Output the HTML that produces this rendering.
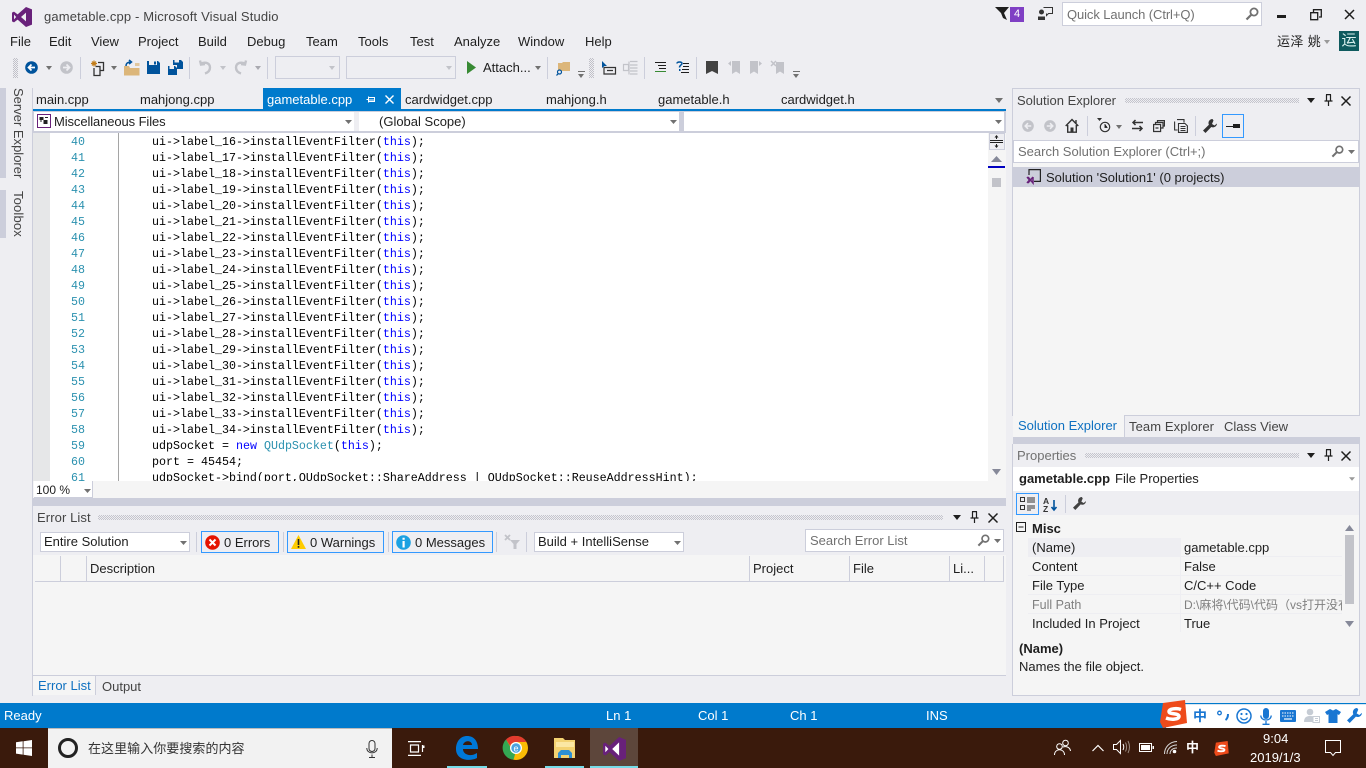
<!DOCTYPE html>
<html lang="en"><head><meta charset="utf-8"><title>gametable.cpp - Microsoft Visual Studio</title>
<style>
*{box-sizing:border-box}
html,body{margin:0;padding:0;width:1366px;height:768px;overflow:hidden;background:#eeeef2;font-family:"Liberation Sans","Noto Sans CJK SC",sans-serif;font-size:13px;color:#1e1e1e}
.t{position:absolute;white-space:nowrap;line-height:16px}
.b{position:absolute}
svg{position:absolute;overflow:visible}
.dd{position:absolute;width:0;height:0;border-left:3.5px solid transparent;border-right:3.5px solid transparent;border-top:4px solid #717171}
.sep{position:absolute;width:1px;height:22px;background:#ccceDB}
.grip{position:absolute;height:5px;background:conic-gradient(#c4c4cc 25%,transparent 0 50%,#c4c4cc 0 75%,transparent 0) 0 0/2px 2px}
.tgrip{position:absolute;width:5px;height:20px;background:conic-gradient(#c0c0c8 25%,transparent 0 50%,#c0c0c8 0 75%,transparent 0) 0 0/2px 2px}
pre{position:absolute;margin:0;font-family:"Liberation Mono",monospace;font-size:11.67px;line-height:16px;color:#000}
i{font-style:normal}
.k{color:#00f}.c{color:#2b91af}
.row{position:absolute;left:1028px;width:314px;height:18px;background:#f5f5f5}
.ebtn{position:absolute;height:22px;top:531px;border:1px solid #3399ff;background:#eeeef2}
</style></head><body>

<!-- title bar -->
<svg style="left:12px;top:7px" width="20" height="20" viewBox="0 0 20 20"><path fill="#68217a" d="M14 0l6 2.400v15.200L14 20 5.600 12.600 2 15.400 0 14.400V5.600l2-1 3.600 2.800zM14 5.600L9 10l5 4.400zM2 7.600v4.800L4.200 10z"/></svg>
<div class="t" style="left:44px;top:9px;color:#444;letter-spacing:.15px">gametable.cpp - Microsoft Visual Studio</div>

<!-- notifications -->
<svg style="left:995px;top:6px" width="15" height="15" viewBox="0 0 15 15"><path fill="#1e1e1e" d="M0 1h14L9 7l3 7-4-2-2-5z"/></svg>
<div class="b" style="left:1010px;top:7px;width:14px;height:15px;background:#7f3fc4;color:#fff;font-size:11px;line-height:15px;text-align:center">4</div>
<svg style="left:1038px;top:6px" width="15" height="15" viewBox="0 0 15 15"><circle cx="3.500" cy="6" r="2.500" fill="#333"/><path fill="#333" d="M0 14v-3.500h7V14z"/><path fill="none" stroke="#333" d="M5.500 1.500h9v6h-4l-2 2v-2"/></svg>
<div class="b" style="left:1062px;top:2px;width:200px;height:24px;background:#fff;border:1px solid #ccceDB"></div>
<div class="t" style="left:1067px;top:7px;color:#717171;letter-spacing:-.1px">Quick Launch (Ctrl+Q)</div>
<svg style="left:1245px;top:7px" width="14" height="14" viewBox="0 0 14 14"><circle cx="9" cy="5" r="3.600" fill="none" stroke="#717171" stroke-width="1.800"/><path stroke="#717171" stroke-width="2.200" d="M6.500 7.500L1.500 12.500"/></svg>
<div class="b" style="left:1277px;top:15px;width:9px;height:3px;background:#1e1e1e"></div>
<svg style="left:1310px;top:9px" width="12" height="12" viewBox="0 0 12 12"><path fill="none" stroke="#1e1e1e" stroke-width="1.300" d="M.7 3.700h7v7h-7zM3.500 3V.7h7.800v7.300H9"/></svg>
<svg style="left:1344px;top:9px" width="12" height="12" viewBox="0 0 12 12"><path stroke="#1e1e1e" stroke-width="1.500" d="M1 1l9 9M10 1l-9 9"/></svg>

<div class="t" style="left:1277px;top:34px;letter-spacing:.4px">运泽 姚</div>
<div class="dd" style="left:1324px;top:40px;border-top-color:#999"></div>
<div class="b" style="left:1339px;top:31px;width:20px;height:20px;background:#0e5a5e;color:#d8f0ee;font-size:15px;line-height:20px;text-align:center">运</div>

<!-- menu -->
<div class="t" style="left:10px;top:34px">File</div>
<div class="t" style="left:49px;top:34px">Edit</div>
<div class="t" style="left:91px;top:34px">View</div>
<div class="t" style="left:138px;top:34px">Project</div>
<div class="t" style="left:198px;top:34px">Build</div>
<div class="t" style="left:247px;top:34px">Debug</div>
<div class="t" style="left:306px;top:34px">Team</div>
<div class="t" style="left:358px;top:34px">Tools</div>
<div class="t" style="left:410px;top:34px">Test</div>
<div class="t" style="left:454px;top:34px">Analyze</div>
<div class="t" style="left:518px;top:34px">Window</div>
<div class="t" style="left:585px;top:34px">Help</div>

<!-- toolbar -->
<div class="tgrip" style="left:13px;top:58px"></div>
<svg style="left:25px;top:61px" width="13" height="13" viewBox="0 0 13 13"><circle cx="6.500" cy="6.500" r="6.300" fill="#00539c"/><path stroke="#fff" stroke-width="1.700" fill="none" d="M10 6.500H4M6.500 3.500l-3 3 3 3"/></svg>
<div class="dd" style="left:46px;top:66px"></div>
<svg style="left:60px;top:61px" width="13" height="13" viewBox="0 0 13 13"><circle cx="6.500" cy="6.500" r="6.300" fill="#c2c3c9"/><path stroke="#eeeef2" stroke-width="1.700" fill="none" d="M3 6.500h6M6.500 3.500l3 3-3 3"/></svg>
<div class="sep" style="left:80px;top:57px"></div>
<svg style="left:90px;top:60px" width="15" height="16" viewBox="0 0 15 16"><path fill="none" stroke="#c27d1a" stroke-width="1.200" d="M1 3.500h6M4 .5v6M2 1.500l4 4M6 1.500l-4 4"/><path fill="none" stroke="#333" stroke-width="1.300" d="M8 2.500h5.500v8H10M4 8v7.500h6V6.500H5.500"/></svg>
<div class="dd" style="left:111px;top:66px"></div>
<svg style="left:124px;top:60px" width="16" height="16" viewBox="0 0 16 16"><path fill="#dcb67a" d="M0 6h5l1 2h9.500v7.500H0z"/><path fill="#dcb67a" d="M11 3h4.500v3H11z" opacity=".7"/><path fill="none" stroke="#00539c" stroke-width="1.500" d="M2 6c0-3 2-4 5-4M5 0l2.500 2L5 4"/></svg>
<svg style="left:147px;top:61px" width="13" height="13" viewBox="0 0 13 13"><path fill="#00539c" d="M0 0h2v4h8V0h1l2 2v11H0zM7 .5h2v3H7z"/></svg>
<svg style="left:168px;top:60px" width="15" height="15" viewBox="0 0 15 15"><path fill="#00539c" d="M5 0h1.500v2.500H11V0H13l2 2v7H9V5H5zM0 6h1.500v3H6V6h1l2 2v7H0z"/></svg>
<div class="sep" style="left:189px;top:57px"></div>
<svg style="left:198px;top:60px" width="15" height="15" viewBox="0 0 15 15"><path fill="none" stroke="#c2c3c9" stroke-width="2.400" d="M3 3.500c5-2 9 0 9 4 0 3-2 5-5 6M2 .5l1 4 4-.5"/></svg>
<div class="dd" style="left:220px;top:66px;border-top-color:#c2c3c9"></div>
<svg style="left:233px;top:60px" width="15" height="15" viewBox="0 0 15 15"><path fill="none" stroke="#c2c3c9" stroke-width="2.400" d="M12 3.500c-5-2-9 0-9 4 0 3 2 5 5 6M13 .5l-1 4-4-.5"/></svg>
<div class="dd" style="left:255px;top:66px;border-top-color:#a9a9b0"></div>
<div class="sep" style="left:267px;top:57px"></div>
<div class="b" style="left:275px;top:56px;width:65px;height:23px;border:1px solid #ccceDB"></div>
<div class="dd" style="left:329px;top:66px;border-top-color:#c2c3c9"></div>
<div class="b" style="left:346px;top:56px;width:110px;height:23px;border:1px solid #ccceDB"></div>
<div class="dd" style="left:446px;top:66px;border-top-color:#c2c3c9"></div>
<svg style="left:466px;top:61px" width="11" height="13" viewBox="0 0 11 13"><path fill="#388a34" d="M1 0l9 6.500L1 13z"/></svg>
<div class="t" style="left:483px;top:60px">Attach...</div>
<div class="dd" style="left:535px;top:66px"></div>
<div class="sep" style="left:547px;top:57px"></div>
<svg style="left:556px;top:61px" width="15" height="15" viewBox="0 0 15 15"><path fill="#dcb67a" d="M2 2h4l1-1h7v9H2z"/><circle cx="3.500" cy="11" r="2" fill="#eeeef2" stroke="#00539c" stroke-width="1.200"/><path stroke="#00539c" stroke-width="1.300" d="M2.300 12.500L.5 14.500"/></svg>
<div class="b" style="left:578px;top:71px;width:7px;height:1px;background:#717171"></div>
<div class="dd" style="left:578px;top:74px"></div>
<div class="tgrip" style="left:589px;top:58px"></div>
<svg style="left:601px;top:61px" width="15" height="14" viewBox="0 0 15 14"><path fill="#00539c" d="M1 0l5 5H3.500L1 7z"/><path fill="none" stroke="#333" stroke-width="1.200" d="M3 6.500h11.500v6.500H3zM6 9.500h6"/></svg>
<svg style="left:623px;top:61px" width="15" height="14" viewBox="0 0 15 14"><path fill="none" stroke="#c2c3c9" stroke-width="1.200" d="M.5 3.500h5v6h-5zM7 .5h7.500M7 4h7.500M7 7h7.500M7 10h7.500M7 13h7.500M6 .5v13"/></svg>
<div class="sep" style="left:644px;top:57px"></div>
<svg style="left:655px;top:62px" width="11" height="11" viewBox="0 0 11 11"><path stroke="#1e1e1e" d="M0 .5h11M3 3.500h8M4 6.500h7"/><path stroke="#388a34" d="M0 9.500h11"/></svg>
<svg style="left:676px;top:61px" width="13" height="13" viewBox="0 0 13 13"><path fill="none" stroke="#00539c" stroke-width="1.500" d="M1 2.500c0-2 5-2 5 0 0 1.500-2.500 1.500-2.500 4"/><path fill="#00539c" d="M3 8h1.500v2H3z"/><path stroke="#1e1e1e" d="M7 2.500h6M7 5.500h6M6 8.500h7M5 11.500h8"/></svg>
<div class="sep" style="left:696px;top:57px"></div>
<svg style="left:706px;top:61px" width="12" height="13" viewBox="0 0 12 13"><path fill="#424242" d="M0 0h12v13l-6-3-6 3z"/></svg>
<svg style="left:728px;top:60px" width="13" height="14" viewBox="0 0 13 14"><path fill="#c2c3c9" d="M4 1h8v13l-4-2.500-4 2.500zM0 3.500l3-2.500v5z"/></svg>
<svg style="left:749px;top:60px" width="13" height="14" viewBox="0 0 13 14"><path fill="#c2c3c9" d="M1 1h8v13l-4-2.500-4 2.500zM13 3.500l-3-2.500v5z"/></svg>
<svg style="left:771px;top:60px" width="14" height="14" viewBox="0 0 14 14"><path fill="#c2c3c9" d="M5 2h8v12l-4-2.500-4 2.500z"/><path stroke="#c2c3c9" stroke-width="1.500" d="M0 1l5 5M5 1L0 6"/></svg>
<div class="b" style="left:793px;top:71px;width:7px;height:1px;background:#717171"></div>
<div class="dd" style="left:793px;top:74px"></div>

<!-- left dock strip -->
<div class="b" style="left:0;top:88px;width:6px;height:90px;background:#ccceDB"></div>
<div class="b" style="left:0;top:190px;width:6px;height:48px;background:#ccceDB"></div>
<div class="t" style="left:10px;top:88px;transform-origin:0 0;transform:translateX(16px) rotate(90deg);color:#444">Server Explorer</div>
<div class="t" style="left:10px;top:191px;transform-origin:0 0;transform:translateX(16px) rotate(90deg);color:#444;letter-spacing:.15px">Toolbox</div>
<div class="b" style="left:32px;top:88px;width:1px;height:608px;background:#ccceDB"></div>

<!-- tabs -->
<div class="t" style="left:36px;top:92px">main.cpp</div>
<div class="t" style="left:140px;top:92px">mahjong.cpp</div>
<div class="b" style="left:263px;top:88px;width:138px;height:21px;background:#007acc"></div>
<div class="t" style="left:267px;top:92px;color:#fff">gametable.cpp</div>
<svg style="left:366px;top:95px" width="9" height="9" viewBox="0 0 9 9"><path fill="none" stroke="#fff" d="M.5 4.500h2M2.500 1.500v6M2.500 2.500h6v4h-6M2.500 5h6"/></svg>
<svg style="left:385px;top:95px" width="9" height="9" viewBox="0 0 9 9"><path stroke="#fff" stroke-width="1.400" d="M.5.500l8 8M8.500.5l-8 8"/></svg>
<div class="t" style="left:405px;top:92px">cardwidget.cpp</div>
<div class="t" style="left:546px;top:92px">mahjong.h</div>
<div class="t" style="left:658px;top:92px">gametable.h</div>
<div class="t" style="left:781px;top:92px">cardwidget.h</div>
<svg style="left:995px;top:98px" width="8" height="5" viewBox="0 0 8 5"><path fill="#717171" d="M0 0h8L4 5z"/></svg>
<div class="b" style="left:33px;top:108.500px;width:973px;height:2.500px;background:#007acc"></div>

<!-- nav bar -->
<div class="b" style="left:33px;top:111px;width:973px;height:22px;background:#ccceDB"></div>
<div class="b" style="left:34px;top:112px;width:645px;height:19px;background:#fff"></div>
<div class="b" style="left:679px;top:112px;width:5px;height:19px;background:#ccceDB"></div>
<div class="b" style="left:684px;top:112px;width:320px;height:19px;background:#fff"></div>
<div class="b" style="left:354px;top:112px;width:5px;height:19px;background:#eeeef2"></div>
<svg style="left:37px;top:114px" width="14" height="14" viewBox="0 0 14 14"><rect x=".5" y=".5" width="13" height="13" fill="#fff" stroke="#68217a"/><path fill="#222" d="M2.500 3h4v3h-4zM6.500 6h4v4h-4z"/><path stroke="#222" d="M4 6v2M8 3.500h3"/></svg>
<div class="t" style="left:54px;top:114px;letter-spacing:-.1px">Miscellaneous Files</div>
<svg style="left:345px;top:120px" width="7" height="4" viewBox="0 0 7 4"><path fill="#717171" d="M0 0h7L3.500 4z"/></svg>
<div class="t" style="left:379px;top:114px">(Global Scope)</div>
<svg style="left:670px;top:120px" width="7" height="4" viewBox="0 0 7 4"><path fill="#717171" d="M0 0h7L3.500 4z"/></svg>
<svg style="left:995px;top:120px" width="7" height="4" viewBox="0 0 7 4"><path fill="#717171" d="M0 0h7L3.500 4z"/></svg>

<!-- editor -->
<div class="b" style="left:33px;top:133px;width:973px;height:348px;background:#fff;overflow:hidden">
<div class="b" style="left:0;top:0;width:17px;height:348px;background:#e6e7e8"></div>
<div class="b" style="left:85px;top:0;width:1px;height:348px;background:#a5a5a5"></div>
<pre class="c" style="left:38px;top:1px;width:15px;color:#2b91af">40
41
42
43
44
45
46
47
48
49
50
51
52
53
54
55
56
57
58
59
60
61</pre>
<pre style="left:119px;top:1px">ui-&gt;label_16-&gt;installEventFilter(<i class="k">this</i>);
ui-&gt;label_17-&gt;installEventFilter(<i class="k">this</i>);
ui-&gt;label_18-&gt;installEventFilter(<i class="k">this</i>);
ui-&gt;label_19-&gt;installEventFilter(<i class="k">this</i>);
ui-&gt;label_20-&gt;installEventFilter(<i class="k">this</i>);
ui-&gt;label_21-&gt;installEventFilter(<i class="k">this</i>);
ui-&gt;label_22-&gt;installEventFilter(<i class="k">this</i>);
ui-&gt;label_23-&gt;installEventFilter(<i class="k">this</i>);
ui-&gt;label_24-&gt;installEventFilter(<i class="k">this</i>);
ui-&gt;label_25-&gt;installEventFilter(<i class="k">this</i>);
ui-&gt;label_26-&gt;installEventFilter(<i class="k">this</i>);
ui-&gt;label_27-&gt;installEventFilter(<i class="k">this</i>);
ui-&gt;label_28-&gt;installEventFilter(<i class="k">this</i>);
ui-&gt;label_29-&gt;installEventFilter(<i class="k">this</i>);
ui-&gt;label_30-&gt;installEventFilter(<i class="k">this</i>);
ui-&gt;label_31-&gt;installEventFilter(<i class="k">this</i>);
ui-&gt;label_32-&gt;installEventFilter(<i class="k">this</i>);
ui-&gt;label_33-&gt;installEventFilter(<i class="k">this</i>);
ui-&gt;label_34-&gt;installEventFilter(<i class="k">this</i>);
udpSocket = <i class="k">new</i> <i class="c">QUdpSocket</i>(<i class="k">this</i>);
port = 45454;
udpSocket-&gt;bind(port,QUdpSocket::ShareAddress | QUdpSocket::ReuseAddressHint);</pre>
</div>
<!-- editor scrollbar -->
<div class="b" style="left:988px;top:133px;width:18px;height:348px;background:#f5f5f5"></div>
<div class="b" style="left:989px;top:133px;width:16px;height:17px;background:#eeeef2;border:1px solid #ccceDB"></div>
<svg style="left:990px;top:135px" width="13" height="13" viewBox="0 0 13 13"><path stroke="#222" d="M0 5.500h13M0 7.500h13M6.500 1v3M6.500 9v3"/><path fill="#222" d="M4.500 2.500l2-2.500 2 2.500zM4.500 10.500l2 2.500 2-2.500z"/></svg>
<svg style="left:991px;top:156px" width="11" height="6" viewBox="0 0 11 6"><path fill="#868999" d="M0 6l5.500-6L11 6z"/></svg>
<div class="b" style="left:988px;top:166px;width:17px;height:1.500px;background:#0000c0"></div>
<div class="b" style="left:992px;top:178px;width:9px;height:9px;background:#c2c3c9"></div>
<svg style="left:992px;top:469px" width="9" height="6" viewBox="0 0 9 6"><path fill="#868999" d="M0 0l4.500 6L9 0z"/></svg>

<!-- zoom row -->
<div class="b" style="left:33px;top:481px;width:973px;height:17px;background:#f5f5f5"></div>
<div class="b" style="left:34px;top:481px;width:59px;height:17px;background:#fff;border-right:1px solid #ccceDB;border-bottom:1px solid #ccceDB"></div>
<div class="t" style="left:36px;top:482px;font-size:12px">100 %</div>
<svg style="left:84px;top:489px" width="7" height="4" viewBox="0 0 7 4"><path fill="#717171" d="M0 0h7L3.500 4z"/></svg>
<div class="b" style="left:33px;top:498px;width:973px;height:8px;background:#ccceDB"></div>

<!-- error list -->
<div class="b" style="left:33px;top:506px;width:973px;height:49px;background:#eeeef2"></div>
<div class="t" style="left:37px;top:510px;color:#444;letter-spacing:.1px">Error List</div>
<div class="grip" style="left:98px;top:515px;width:845px"></div>
<svg style="left:953px;top:515px" width="8" height="5" viewBox="0 0 8 5"><path fill="#1e1e1e" d="M0 0h8L4 5z"/></svg>
<svg style="left:970px;top:511px" width="9" height="12" viewBox="0 0 9 12"><path fill="none" stroke="#1e1e1e" stroke-width="1.200" d="M2 .6h5M2.500 .6v6M6.500 .6v6M.5 7h8M4.500 7v5"/></svg>
<svg style="left:988px;top:513px" width="10" height="10" viewBox="0 0 10 10"><path stroke="#1e1e1e" stroke-width="1.500" d="M.5.500l9 9M9.500.5l-9 9"/></svg>

<div class="b" style="left:40px;top:532px;width:150px;height:20px;background:#fff;border:1px solid #ccceDB"></div>
<div class="t" style="left:44px;top:534px">Entire Solution</div>
<svg style="left:180px;top:541px" width="7" height="4" viewBox="0 0 7 4"><path fill="#717171" d="M0 0h7L3.500 4z"/></svg>
<div class="sep" style="left:196px;top:532px;height:20px"></div>
<div class="ebtn" style="left:201px;width:78px"></div>
<svg style="left:205px;top:535px" width="15" height="15" viewBox="0 0 15 15"><circle cx="7.500" cy="7.500" r="7.300" fill="#e51400"/><path stroke="#fff" stroke-width="2" d="M4.500 4.500l6 6M10.500 4.500l-6 6"/></svg>
<div class="t" style="left:224px;top:535px">0 Errors</div>
<div class="sep" style="left:283px;top:532px;height:20px"></div>
<div class="ebtn" style="left:287px;width:97px"></div>
<svg style="left:291px;top:535px" width="15" height="14" viewBox="0 0 15 14"><path fill="#fc0" d="M7.500 0L15 14H0z"/><path fill="#222" d="M6.700 4h1.600v6H6.700zM6.700 11h1.600v1.800H6.700z"/></svg>
<div class="t" style="left:310px;top:535px">0 Warnings</div>
<div class="sep" style="left:388px;top:532px;height:20px"></div>
<div class="ebtn" style="left:392px;width:101px"></div>
<svg style="left:396px;top:535px" width="15" height="15" viewBox="0 0 15 15"><circle cx="7.500" cy="7.500" r="7.300" fill="#1ba1e2"/><path fill="#fff" d="M6.500 6h2.200v6.500H6.500zM6.500 2.700h2.200v2H6.500z"/></svg>
<div class="t" style="left:415px;top:535px">0 Messages</div>
<div class="sep" style="left:496px;top:532px;height:20px"></div>
<svg style="left:505px;top:534px" width="15" height="15" viewBox="0 0 15 15"><path stroke="#c2c3c9" stroke-width="1.800" d="M0 1l5 5M5 1L0 6"/><path fill="#c2c3c9" d="M5 6h10l-3.500 4v5h-3v-5z"/></svg>
<div class="sep" style="left:526px;top:532px;height:20px"></div>
<div class="b" style="left:534px;top:532px;width:150px;height:20px;background:#fff;border:1px solid #ccceDB"></div>
<div class="t" style="left:538px;top:534px">Build + IntelliSense</div>
<svg style="left:674px;top:541px" width="7" height="4" viewBox="0 0 7 4"><path fill="#717171" d="M0 0h7L3.500 4z"/></svg>
<div class="b" style="left:805px;top:529px;width:199px;height:23px;background:#fff;border:1px solid #ccceDB"></div>
<div class="t" style="left:810px;top:533px;color:#717171">Search Error List</div>
<svg style="left:977px;top:534px" width="13" height="13" viewBox="0 0 14 14"><circle cx="9" cy="5" r="3.600" fill="none" stroke="#717171" stroke-width="1.800"/><path stroke="#717171" stroke-width="2.200" d="M6.500 7.500L1.500 12.500"/></svg>
<svg style="left:994px;top:539px" width="7" height="4" viewBox="0 0 7 4"><path fill="#717171" d="M0 0h7L3.500 4z"/></svg>

<div class="b" style="left:33px;top:555px;width:973px;height:120px;background:#f5f5f5"></div>
<div class="b" style="left:35px;top:581px;width:969px;height:1px;background:#ccceDB"></div>
<div class="b" style="left:60px;top:556px;width:1px;height:25px;background:#ccceDB"></div>
<div class="b" style="left:86px;top:556px;width:1px;height:25px;background:#ccceDB"></div>
<div class="b" style="left:749px;top:556px;width:1px;height:25px;background:#ccceDB"></div>
<div class="b" style="left:849px;top:556px;width:1px;height:25px;background:#ccceDB"></div>
<div class="b" style="left:949px;top:556px;width:1px;height:25px;background:#ccceDB"></div>
<div class="b" style="left:984px;top:556px;width:1px;height:25px;background:#ccceDB"></div>
<div class="b" style="left:1003px;top:556px;width:1px;height:25px;background:#ccceDB"></div>
<div class="t" style="left:90px;top:561px">Description</div>
<div class="t" style="left:753px;top:561px">Project</div>
<div class="t" style="left:853px;top:561px">File</div>
<div class="t" style="left:953px;top:561px">Li...</div>
<div class="b" style="left:33px;top:675px;width:973px;height:1px;background:#ccceDB"></div>
<div class="b" style="left:33px;top:676px;width:63px;height:19px;background:#f5f5f5;border-right:1px solid #ccceDB"></div>
<div class="t" style="left:38px;top:678px;color:#0e70c0">Error List</div>
<div class="t" style="left:102px;top:679px;color:#444">Output</div>

<!-- solution explorer -->
<div class="b" style="left:1012px;top:88px;width:348px;height:328px;background:#f5f5f5;border:1px solid #ccceDB"></div>
<div class="b" style="left:1013px;top:89px;width:346px;height:52px;background:#eeeef2"></div>
<div class="t" style="left:1017px;top:93px;color:#444">Solution Explorer</div>
<div class="grip" style="left:1125px;top:98px;width:174px"></div>
<svg style="left:1307px;top:98px" width="8" height="5" viewBox="0 0 8 5"><path fill="#1e1e1e" d="M0 0h8L4 5z"/></svg>
<svg style="left:1324px;top:94px" width="9" height="12" viewBox="0 0 9 12"><path fill="none" stroke="#1e1e1e" stroke-width="1.200" d="M2 .6h5M2.500 .6v6M6.500 .6v6M.5 7h8M4.500 7v5"/></svg>
<svg style="left:1341px;top:96px" width="10" height="10" viewBox="0 0 10 10"><path stroke="#1e1e1e" stroke-width="1.500" d="M.5.500l9 9M9.500.5l-9 9"/></svg>
<svg style="left:1022px;top:120px" width="12" height="12" viewBox="0 0 13 13"><circle cx="6.500" cy="6.500" r="6.300" fill="#c2c3c9"/><path stroke="#eeeef2" stroke-width="1.700" fill="none" d="M10 6.500H4M6.500 3.500l-3 3 3 3"/></svg>
<svg style="left:1044px;top:120px" width="12" height="12" viewBox="0 0 13 13"><circle cx="6.500" cy="6.500" r="6.300" fill="#c2c3c9"/><path stroke="#eeeef2" stroke-width="1.700" fill="none" d="M3 6.500h6M6.500 3.500l3 3-3 3"/></svg>
<svg style="left:1065px;top:118px" width="14" height="15" viewBox="0 0 14 15"><path fill="none" stroke="#333" stroke-width="1.400" d="M.7 8L7 1.500 13.300 8M2.700 7v7.200h8.600V7M11 2v3"/><path fill="#333" d="M5.500 9.500h3V14h-3z"/></svg>
<div class="sep" style="left:1087px;top:116px;height:20px"></div>
<svg style="left:1097px;top:118px" width="14" height="15" viewBox="0 0 14 15"><path fill="#333" d="M0 0h5L2.500 3z"/><circle cx="8" cy="9" r="4.700" fill="none" stroke="#333" stroke-width="1.200"/><path stroke="#333" d="M8 6v3.500h2.500"/></svg>
<div class="dd" style="left:1116px;top:125px"></div>
<svg style="left:1131px;top:119px" width="13" height="13" viewBox="0 0 13 13"><path fill="none" stroke="#333" stroke-width="1.500" d="M12 3.500H2M4.500 1L2 3.500 4.500 6M1 9.500h10M8.500 7l2.500 2.500L8.500 12"/></svg>
<svg style="left:1153px;top:120px" width="12" height="12" viewBox="0 0 12 12"><path fill="none" stroke="#333" stroke-width="1.200" d="M.6 4.500h7v7h-7zM2.500 4V2.500h7.500V8H8M4.500 2V.6H11.400V6H10M2.500 8h3"/></svg>
<svg style="left:1174px;top:119px" width="14" height="14" viewBox="0 0 14 14"><path fill="none" stroke="#333" stroke-width="1.100" d="M3 .6h7v3M.6 2.500v8.500h3M4.500 4.500h6.500l2.400 2.400v6.500H4.500zM6.500 7.500h5M6.500 9.500h5M6.500 11.500h5"/></svg>
<div class="sep" style="left:1195px;top:116px;height:20px"></div>
<svg style="left:1203px;top:119px" width="14" height="14" viewBox="0 0 14 14"><path fill="#333" d="M9.500 0a4 4 0 0 0-3.600 5.800L0 11.500 2.500 14l5.800-6A4 4 0 0 0 14 4.500l-2.500 2L9 5 10.500 1.500z"/></svg>
<div class="b" style="left:1222px;top:114px;width:22px;height:24px;border:1px solid #3399ff"></div>
<div class="b" style="left:1226px;top:126px;width:14px;height:1px;background:#1e1e1e"></div>
<div class="b" style="left:1233px;top:124px;width:7px;height:4px;background:#1e1e1e"></div>
<div class="b" style="left:1013px;top:140px;width:346px;height:23px;background:#fff;border:1px solid #ccceDB"></div>
<div class="t" style="left:1018px;top:144px;color:#717171">Search Solution Explorer (Ctrl+;)</div>
<svg style="left:1331px;top:145px" width="13" height="13" viewBox="0 0 14 14"><circle cx="9" cy="5" r="3.600" fill="none" stroke="#717171" stroke-width="1.800"/><path stroke="#717171" stroke-width="2.200" d="M6.500 7.500L1.500 12.500"/></svg>
<svg style="left:1348px;top:150px" width="7" height="4" viewBox="0 0 7 4"><path fill="#717171" d="M0 0h7L3.500 4z"/></svg>
<div class="b" style="left:1013px;top:167px;width:346px;height:20px;background:#ccceDB"></div>
<svg style="left:1026px;top:169px" width="15" height="15" viewBox="0 0 15 15"><path fill="none" stroke="#222" stroke-width="1.200" d="M3 6V.6h11.400v11.800H8"/><path fill="none" stroke="#68217a" stroke-width="1.500" d="M1 8l2.500 3L1 14M7 8l-5 6M7 8v6L2 8"/></svg>
<div class="t" style="left:1046px;top:170px">Solution 'Solution1' (0 projects)</div>
<div class="b" style="left:1013px;top:415px;width:111px;height:22px;background:#f5f5f5"></div>
<div class="b" style="left:1124px;top:415px;width:1px;height:22px;background:#ccceDB"></div>
<div class="b" style="left:1125px;top:415px;width:235px;height:1px;background:#ccceDB"></div>
<div class="t" style="left:1018px;top:418px;color:#0e70c0">Solution Explorer</div>
<div class="t" style="left:1129px;top:419px;color:#444;letter-spacing:.1px">Team Explorer</div>
<div class="t" style="left:1224px;top:419px;color:#444">Class View</div>
<div class="b" style="left:1013px;top:437px;width:347px;height:7px;background:#ccceDB"></div>

<!-- properties -->
<div class="b" style="left:1012px;top:444px;width:348px;height:252px;background:#f5f5f5;border:1px solid #ccceDB;border-top:0"></div>
<div class="b" style="left:1013px;top:444px;width:346px;height:24px;background:#eeeef2"></div>
<div class="t" style="left:1017px;top:448px;color:#717171">Properties</div>
<div class="grip" style="left:1085px;top:453px;width:214px"></div>
<svg style="left:1307px;top:453px" width="8" height="5" viewBox="0 0 8 5"><path fill="#1e1e1e" d="M0 0h8L4 5z"/></svg>
<svg style="left:1324px;top:449px" width="9" height="12" viewBox="0 0 9 12"><path fill="none" stroke="#1e1e1e" stroke-width="1.200" d="M2 .6h5M2.500 .6v6M6.500 .6v6M.5 7h8M4.500 7v5"/></svg>
<svg style="left:1341px;top:451px" width="10" height="10" viewBox="0 0 10 10"><path stroke="#1e1e1e" stroke-width="1.500" d="M.5.500l9 9M9.500.5l-9 9"/></svg>
<div class="b" style="left:1013px;top:467px;width:346px;height:24px;background:#fff"></div>
<div class="t" style="left:1019px;top:471px;font-weight:bold">gametable.cpp</div>
<div class="t" style="left:1115px;top:471px">File Properties</div>
<svg style="left:1349px;top:477px" width="6" height="4" viewBox="0 0 7 4"><path fill="#999" d="M0 0h7L3.500 4z"/></svg>
<div class="b" style="left:1013px;top:491px;width:346px;height:24px;background:#eeeef2"></div>
<div class="b" style="left:1016px;top:493px;width:23px;height:22px;border:1px solid #3399ff"></div>
<svg style="left:1020px;top:497px" width="15" height="14" viewBox="0 0 15 14"><path fill="none" stroke="#333" d="M.5.500h4v4h-4zM.5 8.500h4v4h-4zM7 1h8M7 3h8M7 5h8M7 9h8M7 11h8M7 13h4"/></svg>
<svg style="left:1043px;top:497px" width="15" height="15" viewBox="0 0 15 15"><text x="0" y="7" font-family="Liberation Sans" font-size="8.500" font-weight="bold" fill="#333">A</text><text x="0" y="15" font-family="Liberation Sans" font-size="8.500" font-weight="bold" fill="#333">Z</text><path stroke="#00539c" stroke-width="1.600" fill="none" d="M11 3v10M8.500 10l2.500 3 2.500-3"/></svg>
<div class="sep" style="left:1065px;top:495px;height:18px"></div>
<svg style="left:1073px;top:497px" width="13" height="13" viewBox="0 0 14 14"><path fill="#424242" d="M9.500 0a4 4 0 0 0-3.600 5.800L0 11.500 2.500 14l5.800-6A4 4 0 0 0 14 4.500l-2.500 2L9 5 10.500 1.500z"/></svg>
<svg style="left:1016px;top:522px" width="11" height="11" viewBox="0 0 11 11"><path fill="none" stroke="#1e1e1e" d="M.5.500h9v9h-9zM2.500 5h5"/></svg>
<div class="t" style="left:1032px;top:521px;font-weight:bold">Misc</div>
<div class="b" style="left:1028px;top:538px;width:314px;height:18px;background:#eeeef2"></div>
<div class="b" style="left:1181px;top:538px;width:161px;height:18px;background:#f5f5f5"></div>
<div class="row" style="top:557px"></div>
<div class="row" style="top:576px"></div>
<div class="row" style="top:595px"></div>
<div class="row" style="top:614px"></div>
<div class="b" style="left:1028px;top:556px;width:314px;height:1px;background:#eeeef2"></div>
<div class="b" style="left:1028px;top:575px;width:314px;height:1px;background:#eeeef2"></div>
<div class="b" style="left:1028px;top:594px;width:314px;height:1px;background:#eeeef2"></div>
<div class="b" style="left:1028px;top:613px;width:314px;height:1px;background:#eeeef2"></div>
<div class="b" style="left:1180px;top:538px;width:1px;height:94px;background:#eeeef2"></div>
<div class="t" style="left:1032px;top:540px">(Name)</div><div class="t" style="left:1184px;top:540px">gametable.cpp</div>
<div class="t" style="left:1032px;top:559px">Content</div><div class="t" style="left:1184px;top:559px">False</div>
<div class="t" style="left:1032px;top:578px">File Type</div><div class="t" style="left:1184px;top:578px">C/C++ Code</div>
<div class="t" style="left:1032px;top:597px;color:#808080;font-size:12.500px">Full Path</div>
<div class="b" style="left:1184px;top:597px;width:158px;height:16px;overflow:hidden"><div class="t" style="left:0;top:0;color:#808080;font-size:12px">D:\麻将\代码\代码（vs打开没有</div></div>
<div class="t" style="left:1032px;top:616px">Included In Project</div><div class="t" style="left:1184px;top:616px">True</div>
<div class="b" style="left:1342px;top:518px;width:15px;height:115px;background:#f5f5f5"></div>
<svg style="left:1345px;top:525px" width="9" height="6" viewBox="0 0 9 6"><path fill="#868999" d="M0 6l4.500-6L9 6z"/></svg>
<div class="b" style="left:1345px;top:535px;width:9px;height:69px;background:#c2c3c9"></div>
<svg style="left:1345px;top:621px" width="9" height="6" viewBox="0 0 9 6"><path fill="#868999" d="M0 0l4.500 6L9 0z"/></svg>
<div class="t" style="left:1019px;top:641px;font-weight:bold">(Name)</div>
<div class="t" style="left:1019px;top:659px">Names the file object.</div>

<!-- status bar -->
<div class="b" style="left:0;top:703px;width:1366px;height:25px;background:#007acc"></div>
<div class="t" style="left:4px;top:708px;color:#fff">Ready</div>
<div class="t" style="left:606px;top:708px;color:#fff">Ln 1</div>
<div class="t" style="left:698px;top:708px;color:#fff">Col 1</div>
<div class="t" style="left:790px;top:708px;color:#fff">Ch 1</div>
<div class="t" style="left:926px;top:708px;color:#fff">INS</div>

<!-- sogou bar -->
<div class="b" style="left:1166px;top:704px;width:200px;height:24px;background:#fff;border-top:1px solid #d9e6f2"></div>
<svg style="left:1160px;top:700px" width="27" height="28" viewBox="0 0 27 28"><path fill="#ee4b1b" d="M3 3L25 0l2 23-24 5-3-6z"/><path fill="none" stroke="#fff" stroke-width="3.500" d="M21 9.500c-4-1.500-12-1-12 2 0 3.500 10 1 10 5 0 3-8 3.500-13 1.500"/></svg>
<div class="t" style="left:1193px;top:708px;color:#1976d2;font-size:14px;font-weight:bold">中</div>
<svg style="left:1217px;top:709px" width="13" height="14" viewBox="0 0 13 14"><circle cx="2.500" cy="4" r="1.800" fill="none" stroke="#1976d2" stroke-width="1.300"/><path fill="none" stroke="#1976d2" stroke-width="2" d="M11 5c0 3-1 5-2.500 6"/></svg>
<svg style="left:1236px;top:708px" width="16" height="16" viewBox="0 0 16 16"><circle cx="8" cy="8" r="7" fill="none" stroke="#1976d2" stroke-width="1.500"/><circle cx="5.500" cy="6" r="1.100" fill="#1976d2"/><circle cx="10.500" cy="6" r="1.100" fill="#1976d2"/><path fill="none" stroke="#1976d2" stroke-width="1.300" d="M4.500 9.500c1.500 3 5.500 3 7 0"/></svg>
<svg style="left:1260px;top:708px" width="12" height="17" viewBox="0 0 12 17"><rect x="3" y="0" width="6" height="11" rx="3" fill="#1976d2"/><path fill="none" stroke="#1976d2" stroke-width="1.300" d="M.8 7.500c0 6 10.400 6 10.400 0M6 13v3M2.500 16.300h7"/></svg>
<svg style="left:1280px;top:710px" width="16" height="12" viewBox="0 0 16 12"><rect width="16" height="12" rx="1" fill="#1976d2"/><path stroke="#fff" stroke-dasharray="1.500 1" d="M2 3h12M2 6h12"/><path stroke="#fff" stroke-width="1.200" d="M4 9h8"/></svg>
<svg style="left:1304px;top:708px" width="16" height="16" viewBox="0 0 16 16"><circle cx="6" cy="4" r="3.300" fill="#c6ccd4"/><path fill="#c6ccd4" d="M0 14c0-5 3-6 6-6s4 1 4 1v5z"/><path fill="#fff" stroke="#c6ccd4" d="M9 8.500h6.500v6H9z"/><path stroke="#c6ccd4" d="M11 10.500h3M11 12.500h3"/></svg>
<svg style="left:1325px;top:709px" width="16" height="14" viewBox="0 0 16 14"><path fill="#1976d2" d="M5 0l3 1.500L11 0l5 3-2 3-1.500-.8V14h-9V5.200L2 6 0 3z"/></svg>
<svg style="left:1347px;top:708px" width="15" height="15" viewBox="0 0 14 14"><path fill="#1976d2" d="M9.500 0a4 4 0 0 0-3.600 5.800L0 11.500 2.500 14l5.800-6A4 4 0 0 0 14 4.500l-2.500 2L9 5 10.500 1.500z"/></svg>

<!-- taskbar -->
<div class="b" style="left:0;top:728px;width:1366px;height:40px;background:#3a1a0c"></div>
<svg style="left:16px;top:740px" width="16" height="16" viewBox="0 0 16 16"><path fill="#fff" d="M0 2.300L6.700 1.300V7.500H0zM7.500 1.200L16 0V7.500H7.500zM0 8.300H6.700V14.600L0 13.600zM7.500 8.300H16V16L7.500 14.800z"/></svg>
<div class="b" style="left:48px;top:728px;width:344px;height:40px;background:#f2f2f2;border-top:1px solid #bbb"></div>
<div class="b" style="left:58px;top:738px;width:20px;height:20px;border-radius:50%;border:3px solid #222"></div>
<div class="t" style="left:88px;top:741px;color:#333;font-size:13px;letter-spacing:.05px">在这里输入你要搜索的内容</div>
<svg style="left:366px;top:740px" width="12" height="18" viewBox="0 0 12 18"><rect x="3" y=".5" width="6" height="11" rx="3" fill="none" stroke="#333"/><path fill="none" stroke="#333" d="M.8 8c0 6.500 10.400 6.500 10.400 0M6 14.500v3M3 17.500h6"/></svg>
<svg style="left:408px;top:741px" width="17" height="15" viewBox="0 0 17 15"><path fill="none" stroke="#fff" stroke-width="1.200" d="M0 .6h13M0 14.400h13M2.500 4h8v7h-8zM14.500 4v7"/><rect x="14" y="4.500" width="2.500" height="2.500" fill="#fff"/></svg>
<svg style="left:456px;top:736px" width="22" height="24" viewBox="0 0 22 24"><path fill="#0078d7" d="M11 0c7 0 11 5 11 13H7c0 6 8 8 14 4v5c-8 4-21 2-21-9C0 5 5 0 11 0zM7 9h9c0-5-8-5-9 0z"/></svg>
<svg style="left:504px;top:736px" width="24" height="24" viewBox="0 0 24 24"><circle cx="12" cy="12" r="12" fill="#fbbc05"/><path fill="#e33b2e" d="M12 0a12 12 0 0 1 10.400 6H12a6 6 0 0 0-5.800 4L2 3.500A12 12 0 0 1 12 0z"/><path fill="#34a853" d="M2 3.500l5 8.500 4 6.500-1.500 5.300A12 12 0 0 1 2 3.500z"/><circle cx="12" cy="12" r="6" fill="#fff"/><circle cx="12" cy="12" r="4.700" fill="#4aa3df"/><text x="12" y="15.500" text-anchor="middle" font-family="Liberation Sans" font-size="9" fill="#fff">e</text></svg>
<svg style="left:554px;top:737px" width="22" height="22" viewBox="0 0 22 22"><path fill="#f3d272" d="M0 1h9l2 2h10v18H0z"/><path fill="#fbe7a3" d="M2 5h18v5H2z"/><path fill="#2d8fd5" d="M7 13h8l3 3v5h-3v-3H7v3H4v-5z"/></svg>
<div class="b" style="left:590px;top:728px;width:48px;height:40px;background:#5d463b"></div>
<svg style="left:603px;top:737px" width="23" height="24" viewBox="0 0 20 20" preserveAspectRatio="none"><path fill="#68217a" d="M14 0l6 2.400v15.200L14 20 5.600 12.600 2 15.400 0 14.400V5.600l2-1 3.600 2.800z"/><path fill="#fff" d="M14 4.500L8 10l6 5.500zM2 7.300v5.400L4.700 10z"/></svg>
<div class="b" style="left:447px;top:766px;width:40px;height:2px;background:#76dce8"></div>
<div class="b" style="left:545px;top:766px;width:39px;height:2px;background:#76dce8"></div>
<div class="b" style="left:590px;top:766px;width:48px;height:2px;background:#76dce8"></div>
<svg style="left:1054px;top:739px" width="17" height="17" viewBox="0 0 17 17"><circle cx="11.500" cy="4" r="2.800" fill="none" stroke="#fff"/><circle cx="5.500" cy="7.500" r="2.800" fill="none" stroke="#fff"/><path fill="none" stroke="#fff" d="M.5 16c0-7 10-7 10 0M9 8c3-1 7 0 7.500 4"/></svg>
<svg style="left:1092px;top:744px" width="12" height="8" viewBox="0 0 12 8"><path fill="none" stroke="#fff" stroke-width="1.200" d="M.5 7L6 1.500 11.500 7"/></svg>
<svg style="left:1113px;top:740px" width="17" height="14" viewBox="0 0 17 14"><path fill="none" stroke="#fff" d="M.5 4.500h3l4-4v13l-4-4h-3zM10 4c1 2 1 4 0 6"/><path fill="none" stroke="#9a8a80" d="M12.500 2.500c1.500 3 1.500 6 0 9M15 1c2 4 2 8 0 12"/></svg>
<svg style="left:1139px;top:743px" width="15" height="9" viewBox="0 0 15 9"><path fill="none" stroke="#fff" d="M.5.500h12v8H.5z"/><path fill="#fff" d="M2 2h9v5H2zM13.500 3H15v3h-1.500z"/></svg>
<svg style="left:1164px;top:741px" width="13" height="13" viewBox="0 0 13 13"><path fill="none" stroke="#d8d8d8" d="M.5 13C.5 6 6 .5 13 .5M3 13c0-5 4-9 10-9M6 13c0-3 2-6 7-6"/><circle cx="10.500" cy="10.500" r="1.800" fill="#fff"/></svg>
<div class="t" style="left:1186px;top:740px;color:#fff;font-size:13px;font-weight:bold">中</div>
<svg style="left:1214px;top:741px" width="15" height="15" viewBox="0 0 27 28"><path fill="#ee4b1b" d="M3 3L25 0l2 23-24 5-3-6z"/><path fill="none" stroke="#fff" stroke-width="3.500" d="M21 9.500c-4-1.500-12-1-12 2 0 3.500 10 1 10 5 0 3-8 3.500-13 1.500"/></svg>
<div class="t" style="left:1263px;top:731px;color:#fff">9:04</div>
<div class="t" style="left:1250px;top:750px;color:#fff">2019/1/3</div>
<svg style="left:1325px;top:740px" width="16" height="17" viewBox="0 0 16 17"><path fill="none" stroke="#fff" d="M.5.500h15v12h-5L8 15.500 5.500 12.500h-5z"/></svg>

</body></html>
